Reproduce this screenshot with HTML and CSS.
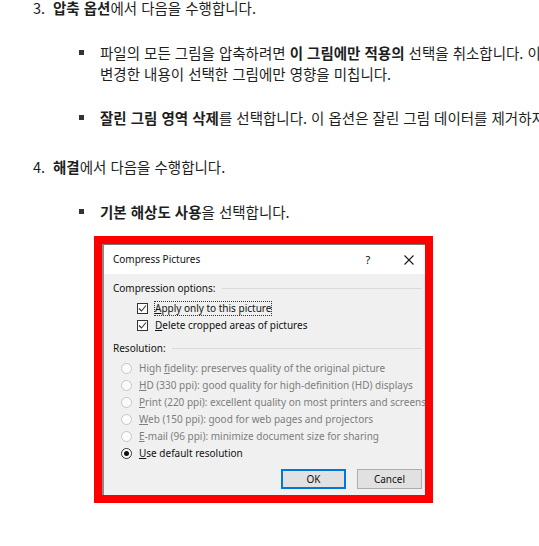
FILE: index.html
```html
<!DOCTYPE html>
<html lang="ko">
<head>
<meta charset="utf-8">
<title>압축 옵션</title>
<link rel="stylesheet" href="styles.css">
</head>
<body>
<div class="doc">
  <div class="step s1"><span class="num">3.</span><span class="txt"><b>압축 옵션</b>에서 다음을 수행합니다.</span></div>
  <div class="bullet b1"><span class="sq"></span><div class="txt">파일의 모든 그림을 압축하려면 <b>이 그림에만 적용의</b> 선택을 취소합니다. 이 옵션을 선택 취소하지 않으면<br>변경한 내용이 선택한 그림에만 영향을 미칩니다.</div></div>
  <div class="bullet b2"><span class="sq"></span><div class="txt"><b>잘린 그림 영역 삭제</b>를 선택합니다. 이 옵션은 잘린 그림 데이터를 제거하지만</div></div>
  <div class="step s2"><span class="num">4.</span><span class="txt"><b>해결</b>에서 다음을 수행합니다.</span></div>
  <div class="bullet b3"><span class="sq"></span><div class="txt"><b>기본 해상도 사용</b>을 선택합니다.</div></div>

  <div class="frame">
    <div class="dialog">
      <div class="titlebar">
        <span class="title">Compress Pictures</span>
        <span class="help">?</span>
        <svg class="close" width="10" height="10" viewBox="0 0 10 10"><path d="M0.5 0.5 L9.5 9.5 M9.5 0.5 L0.5 9.5" stroke="#1a1a1a" stroke-width="1.1" fill="none"/></svg>
      </div>
      <div class="body">
        <div class="group"><span>Compression options:</span><span class="rule"></span></div>
        <div class="checks">
          <div class="row"><span class="cb"><svg width="9" height="9" viewBox="0 0 9 9"><path d="M1 4.5 L3.5 7 L8 1.5" stroke="#333" stroke-width="1.1" fill="none"/></svg></span><span class="focus"><u>A</u>pply only to this picture</span></div>
          <div class="row"><span class="cb"><svg width="9" height="9" viewBox="0 0 9 9"><path d="M1 4.5 L3.5 7 L8 1.5" stroke="#333" stroke-width="1.1" fill="none"/></svg></span><span><u>D</u>elete cropped areas of pictures</span></div>
        </div>
        <div class="group g2"><span>Resolution:</span><span class="rule"></span></div>
        <div class="radios">
          <div class="row dis"><span class="rb"></span><span>High <u>f</u>idelity: preserves quality of the original picture</span></div>
          <div class="row dis"><span class="rb"></span><span><u>H</u>D (330 ppi): good quality for high-definition (HD) displays</span></div>
          <div class="row dis"><span class="rb"></span><span><u>P</u>rint (220 ppi): excellent quality on most printers and screens</span></div>
          <div class="row dis"><span class="rb"></span><span><u>W</u>eb (150 ppi): good for web pages and projectors</span></div>
          <div class="row dis"><span class="rb"></span><span><u>E</u>-mail (96 ppi): minimize document size for sharing</span></div>
          <div class="row"><span class="rb on"></span><span><u>U</u>se default resolution</span></div>
        </div>
        <div class="buttons">
          <span class="btn ok">OK</span>
          <span class="btn">Cancel</span>
        </div>
      </div>
    </div>
  </div>
</div>
</body>
</html>
```
FILE: styles.css
```css
html, body {
  margin: 0;
  padding: 0;
  overflow: hidden;
  background: #ffffff;
}
body {
  width: 539px;
  height: 546px;
  font-family: "Noto Sans CJK KR", "Noto Sans", sans-serif;
  color: #1e1e1e;
}
.doc {
  font-size: 14.5px;
  line-height: 21px;
}
.doc b { font-weight: 700; }
.step {
  display: flex;
  padding-left: 33px;
  white-space: nowrap;
}
.s1 { line-height: 16px; }
.num { width: 20px; flex: none; }
.bullet {
  display: flex;
  align-items: flex-start;
  padding-left: 79px;
  white-space: nowrap;
}
.sq {
  flex: none;
  width: 5px;
  height: 5px;
  background: #333;
  margin-top: 8px;
  margin-right: 16px;
}
.b1 { margin-top: 26px; }
.b2 { margin-top: 23px; }
.s2 { margin-top: 28px; }
.b3 { margin-top: 24px; }

.frame {
  margin-top: 14px;
  margin-left: 94px;
  width: 323px;
  border: 8px solid #ff0000;
}
.dialog {
  border-top: 1px solid #7a7a7a;
  border-left: 2px solid #8a8a8a;
  background: #f0f0f0;
  font-family: "Noto Sans", sans-serif;
  font-size: 10px;
  line-height: 17px;
  color: #111;
}
.titlebar {
  display: flex;
  align-items: center;
  height: 29px;
  background: #ffffff;
  padding-left: 9px;
}
.title { flex: 1; font-size: 10px; }
.help { width: 10px; margin-right: 31px; font-size: 11px; text-align: center; }
.close { margin-right: 11px; }
.body {
  padding: 6px 3px 6px 9px;
}
.group {
  display: flex;
  align-items: center;
}
.rule {
  flex: 1;
  height: 1px;
  background: #dadada;
  margin-left: 6px;
}
.g2 { margin-top: 6px; }
.checks { margin-top: 3px; padding-left: 24px; }
.radios { margin-top: 3px; padding-left: 8px; }
.row {
  display: flex;
  align-items: center;
  height: 17px;
  white-space: nowrap;
}
.cb {
  flex: none;
  width: 9px;
  height: 9px;
  border: 1px solid #333;
  background: #fff;
  margin-right: 7px;
  display: flex;
}
.focus {
  outline: 1px dotted #333;
  outline-offset: 0;
  line-height: 13px;
}
.rb {
  flex: none;
  box-sizing: border-box;
  width: 11px;
  height: 11px;
  border-radius: 50%;
  border: 1px solid #c6c6c6;
  background: #fbfbfb;
  margin-right: 7px;
  position: relative;
}
.rb.on { border-color: #333; background: #fff; }
.rb.on::after {
  content: "";
  position: absolute;
  left: 2px;
  top: 2px;
  width: 5px;
  height: 5px;
  border-radius: 50%;
  background: #111;
}
.dis { color: #7d7d7d; }
.buttons {
  display: flex;
  justify-content: flex-end;
  gap: 11px;
  margin-top: 7px;
}
.btn {
  box-sizing: border-box;
  width: 65px;
  height: 20px;
  border: 1px solid #adadad;
  background: #e1e1e1;
  display: flex;
  align-items: center;
  justify-content: center;
  font-size: 10px;
}
.btn.ok { border: 2px solid #0078d7; }
```
